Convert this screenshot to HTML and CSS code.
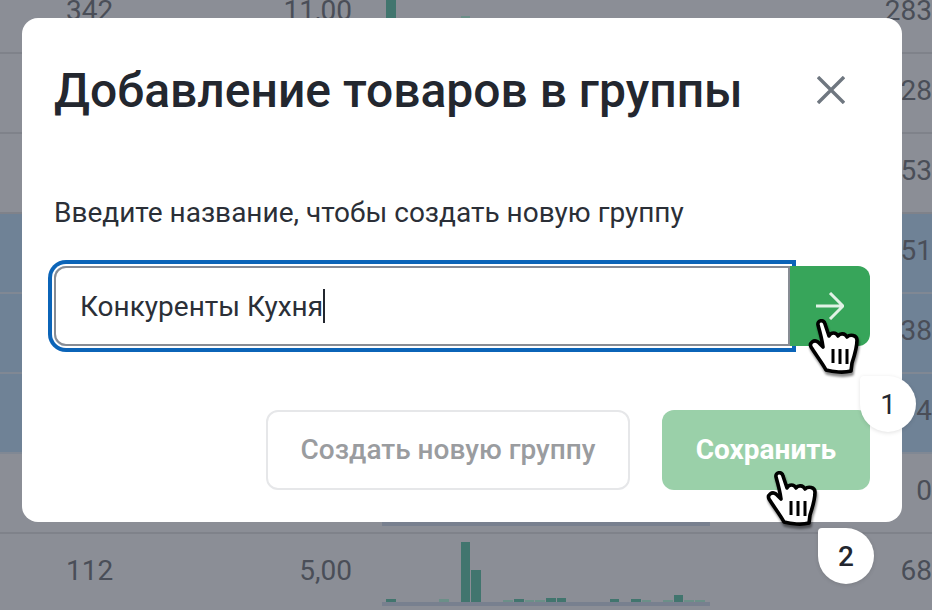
FILE: index.html
```html
<!DOCTYPE html>
<html lang="ru">
<head>
    <meta charset="UTF-8">
    <title>Добавление товаров в группы</title>
    <link rel="stylesheet" href="styles.css">
</head>
<body>
    <svg class="defs" width="0" height="0">
        <symbol id="hand" viewBox="0 0 52 56">
            <path d="M10 6C9 1 16 0 17 5L21 17C23 13 28 13 30 17C32 14 37 14 39 18C42 15 49 16 49 21C49 29 46 38 44 44L43 52C36 54 25 53 18 51C15 45 8 36 3 28C1 24 6 20 10 23L15 28C14 20 12 13 10 6Z" fill="#fff" stroke="#000" stroke-width="3.6" stroke-linejoin="round"/>
            <path d="M25 30V44M32 30V45M39 30V45" fill="none" stroke="#000" stroke-width="3"/>
        </symbol>
    </svg>

    <!-- таблица под модальным окном -->
    <div class="table">
        <div class="row">
            <span class="count">342</span>
            <span class="price">11,00</span>
            <div class="chart">
                <i class="bar" style="height: 66px"></i><i></i><i></i><i></i><i></i><i></i><i></i>
                <i class="bar light" style="height: 26px"></i>
            </div>
            <span class="total">283</span>
        </div>
        <div class="row"><span class="total">28</span></div>
        <div class="row"><span class="total">53</span></div>
        <div class="row selected"><span class="total">51</span></div>
        <div class="row selected"><span class="total">38</span></div>
        <div class="row selected"><span class="total">4</span></div>
        <div class="row">
            <div class="chart"></div>
            <span class="total">0</span>
        </div>
        <div class="row">
            <span class="count">112</span>
            <span class="price">5,00</span>
            <div class="chart">
                <i class="bar" style="height: 3px"></i><i></i><i></i><i></i><i></i>
                <i class="bar light" style="height: 3px"></i><i></i>
                <i class="bar" style="height: 60px"></i>
                <i class="bar" style="height: 32px"></i><i></i><i></i>
                <i class="bar light" style="height: 2px"></i>
                <i class="bar" style="height: 3px"></i>
                <i class="bar light" style="height: 2px"></i>
                <i class="bar light" style="height: 2px"></i>
                <i class="bar" style="height: 4px"></i>
                <i class="bar" style="height: 4px"></i><i></i><i></i><i></i><i></i>
                <i class="bar" style="height: 3px"></i><i></i>
                <i class="bar" style="height: 3px"></i>
                <i class="bar light" style="height: 2px"></i><i></i>
                <i class="bar light" style="height: 2px"></i>
                <i class="bar" style="height: 7px"></i>
                <i class="bar light" style="height: 2px"></i>
                <i class="bar light" style="height: 2px"></i>
            </div>
            <span class="total">68</span>
        </div>
    </div>

    <div class="modal">
        <div class="modal-head">
            <h2>Добавление товаров в группы</h2>
            <svg class="close" width="28" height="28" viewBox="0 0 28 28">
                <path d="M1 1L27 27M27 1L1 27" fill="none" stroke="#6f7780" stroke-width="3.4"/>
            </svg>
        </div>
        <p class="label">Введите название, чтобы создать новую группу</p>
        <div class="field-row">
            <div class="field"><span>Конкуренты Кухня</span><i class="caret"></i></div>
            <button class="go">
                <svg width="28" height="28" viewBox="0 0 28 28">
                    <path d="M0 14H26M14 1L27 14L14 27" fill="none" stroke="#fff" stroke-opacity=".85" stroke-width="3"/>
                </svg>
            </button>
        </div>
        <div class="modal-foot">
            <button class="btn btn-ghost">Создать новую группу</button>
            <button class="btn btn-save">Сохранить</button>
        </div>
    </div>

    <svg class="hand hand-one"><use href="#hand"/></svg>
    <svg class="hand hand-two"><use href="#hand"/></svg>
    <div class="step step-one">1</div>
    <div class="step step-two">2</div>
</body>
</html>
```

FILE: styles.css
```css
* { box-sizing: border-box; }
html, body { height: 100%; }
body { font-family: Roboto, "Liberation Sans", sans-serif; margin: 0; overflow: hidden; background-color: #8b8e96; color: #4a4e58; }
.defs { position: absolute; }

.table { margin-top: -26px; }
.row { display: grid; grid-template-columns: 130px 156px 358px 1fr; align-items: center; height: 80px; padding: 0 0 6px 66px; border-bottom: 2px solid #7f828a; font-size: 28px; }
.row.selected { background-color: #6f8296; border-bottom-color: #808894; }
.count { grid-column: 1; grid-row: 1; }
.price { grid-column: 2; grid-row: 1; text-align: right; }
.total { grid-column: 4; grid-row: 1; text-align: right; }
.chart { grid-column: 3; grid-row: 1; align-self: end; display: flex; align-items: flex-end; height: 72px; margin-left: 30px; padding: 0 4px 4px 3px; position: relative; }
.chart::after { content: ""; position: absolute; left: 0; right: 0; bottom: 0; height: 4px; background-color: #78808f; }
.chart i { flex: none; width: 10.67px; }
.chart .bar { background-color: #41756e; border-left: 1px solid transparent; background-clip: padding-box; }
.chart .bar.light { background-color: #6b8f88; }

.modal { position: absolute; left: 22px; top: 18px; width: 880px; height: 504px; padding: 32px; display: flex; flex-direction: column; background-color: #fff; border-radius: 16px; }
.modal-head { display: flex; justify-content: space-between; align-items: center; height: 80px; padding-right: 25px; }
.modal-head h2 { margin: 0; font-size: 48px; font-weight: 500; color: #23272f; }
.label { margin: 63px 0 0; font-size: 28px; line-height: 40px; color: #2b2f37; }
.field-row { display: flex; margin-top: 33px; }
.field { flex: 1; display: flex; align-items: center; height: 80px; padding-left: 24px; border: 2px solid #878c94; border-radius: 12px 0 0 12px; box-shadow: 0 0 0 2px #fff, 0 0 0 6px #0b64b8; font-size: 28px; color: #2b2f37; }
.caret { width: 2px; height: 34px; background-color: #23272f; }
.go { width: 80px; height: 80px; padding: 0; border: none; border-radius: 0 12px 12px 0; background-color: #37a55a; position: relative; display: flex; align-items: center; justify-content: center; }
.modal-foot { display: flex; justify-content: flex-end; gap: 32px; margin-top: auto; }
.btn { height: 80px; padding: 0 0 2px; border-radius: 12px; font-family: inherit; font-size: 28px; }
.btn-ghost { width: 364px; background-color: #fff; border: 2px solid #e6e7e9; color: #9a9c9f; font-weight: 500; }
.btn-save { width: 208px; background-color: #9ad0a9; border: none; color: #fff; font-weight: 700; }

.hand { position: absolute; width: 52px; height: 56px; filter: drop-shadow(1px 3px 1px rgba(0, 0, 0, .45)); }
.hand-one { left: 808px; top: 319px; }
.hand-two { left: 766px; top: 471px; }
.step { position: absolute; width: 56px; height: 56px; display: flex; align-items: center; justify-content: center; background-color: #fff; border-radius: 4px 50% 50% 50%; box-shadow: 0 1px 4px rgba(0, 0, 0, .12); font-size: 28px; color: #23272f; }
.step-one { left: 860px; top: 376px; }
.step-two { left: 818px; top: 528px; font-weight: 500; }
```
